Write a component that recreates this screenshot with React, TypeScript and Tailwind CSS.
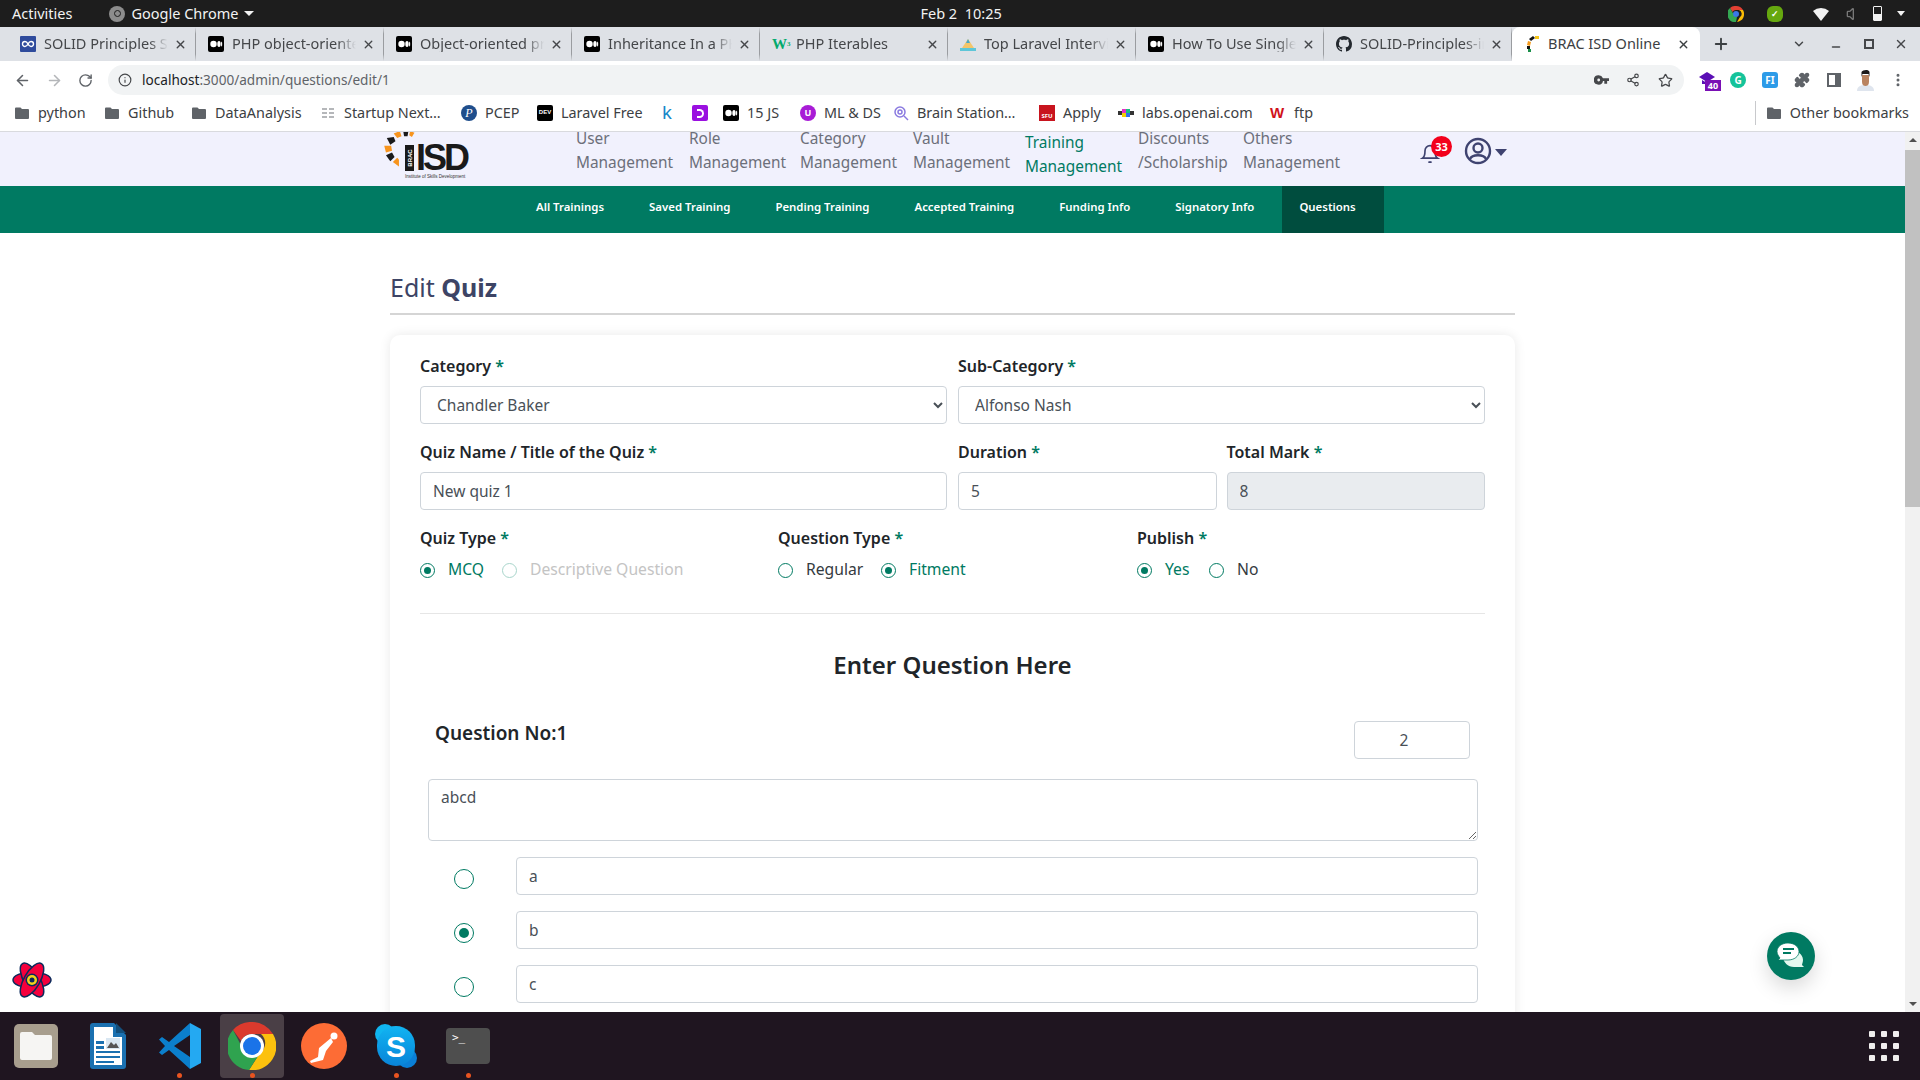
import { useState, type ReactNode } from "react";
import {
  ArrowLeft,
  ArrowRight,
  ChevronDown,
  EllipsisVertical,
  Info,
  Minus,
  Plus,
  Puzzle,
  RotateCw,
  Share2,
  Star,
  Volume,
  X,
} from "lucide-react";

const PAGE_FONT = "font-['Noto_Sans',sans-serif]";

function Medium() {
  return (
    <svg viewBox="0 0 16 16" className="h-4 w-4 shrink-0">
      <rect width="16" height="16" rx="2" fill="#000" />
      <circle cx="5.500" cy="8" r="3.200" fill="#fff" />
      <ellipse cx="11" cy="8" rx="1.700" ry="3" fill="#fff" />
      <ellipse cx="13.600" cy="8" rx="0.600" ry="2.600" fill="#fff" />
    </svg>
  );
}

function Folder() {
  return (
    <svg viewBox="0 0 16 16" className="h-4 w-4 shrink-0" fill="#5f6368">
      <path d="M2 2.500h4.500L8 4h6a1 1 0 0 1 1 1v8a1 1 0 0 1-1 1H2a1 1 0 0 1-1-1V3.500a1 1 0 0 1 1-1z" />
    </svg>
  );
}

const tabIcons: Record<string, ReactNode> = {
  solid: (
    <svg viewBox="0 0 16 16" className="h-4 w-4 shrink-0">
      <rect width="16" height="16" rx="1" fill="#2f4b9c" />
      <path d="M8 8c-1-2-2-2.500-3-2.500a2.500 2.500 0 0 0 0 5C6 10.500 7 10 8 8s2-2.500 3-2.500a2.500 2.500 0 0 1 0 5c-1 0-2-.5-3-2.500z" fill="none" stroke="#fff" strokeWidth="1.400" />
    </svg>
  ),
  medium: <Medium />,
  w3: (
    <span className="w-4 shrink-0 font-['Liberation_Serif',serif] text-[15px] font-bold leading-4 text-[#04aa6d]">
      W<sup className="text-[7px]">3</sup>
    </span>
  ),
  mountain: (
    <svg viewBox="0 0 16 16" className="h-4 w-4 shrink-0">
      <path d="M8 3l6 9H2z" fill="#f4c56a" />
      <path d="M0 12h16v3H0z" fill="#5ec6d8" />
      <path d="M6 7l2-4 2 4z" fill="#4aa8c8" />
    </svg>
  ),
  github: (
    <svg viewBox="0 0 16 16" className="h-4 w-4 shrink-0" fill="#24292f">
      <path d="M8 0C3.580 0 0 3.580 0 8c0 3.540 2.290 6.530 5.470 7.590.4.070.55-.17.55-.38 0-.19-.01-.82-.01-1.490-2.010.37-2.530-.49-2.690-.94-.09-.23-.48-.94-.82-1.130-.28-.15-.68-.52-.01-.53.63-.01 1.080.58 1.230.82.72 1.210 1.870.87 2.330.66.07-.52.28-.87.51-1.070-1.780-.2-3.640-.89-3.640-3.950 0-.87.31-1.590.82-2.150-.08-.2-.36-1.020.08-2.120 0 0 .67-.21 2.200.82.64-.18 1.320-.27 2-.27s1.360.09 2 .27c1.530-1.040 2.200-.82 2.200-.82.44 1.100.16 1.920.08 2.120.51.56.82 1.270.82 2.150 0 3.070-1.870 3.750-3.650 3.950.29.250.54.730.54 1.480 0 1.070-.01 1.930-.01 2.200 0 .21.150.460.550.380A8.010 8.010 0 0 0 16 8c0-4.420-3.580-8-8-8z" />
    </svg>
  ),
  isd: (
    <svg viewBox="0 0 16 16" className="h-4 w-4 shrink-0">
      <path d="M5 3l4-3 2 2-4 3z" fill="#111" />
      <path d="M11 0h4v3h-4z" fill="#f5c518" />
      <path d="M4 5l3 1-1 4-3-1z" fill="#f59a1b" />
      <path d="M3 10l3 0v3H3z" fill="#111" />
      <path d="M4 13l3 0v3H4z" fill="#1a8f4a" />
    </svg>
  ),
};

const tabs = [
  { icon: "solid", title: "SOLID Principles Simplified" },
  { icon: "medium", title: "PHP object-oriented programming" },
  { icon: "medium", title: "Object-oriented programming in PHP" },
  { icon: "medium", title: "Inheritance In a PHP Class" },
  { icon: "w3", title: "PHP Iterables" },
  { icon: "mountain", title: "Top Laravel Interview Questions" },
  { icon: "medium", title: "How To Use Single Responsibility" },
  { icon: "github", title: "SOLID-Principles-in-PHP" },
];

type Mark = { w: string; label: string; icon: ReactNode };

const bookmarks: Mark[] = [
  { w: "w-[90px]", label: "python", icon: <Folder /> },
  { w: "w-[87px]", label: "Github", icon: <Folder /> },
  { w: "w-[129px]", label: "DataAnalysis", icon: <Folder /> },
  {
    w: "w-[141px]",
    label: "Startup Next…",
    icon: (
      <svg viewBox="0 0 16 16" className="h-4 w-4 shrink-0" fill="#b5b7ba">
        <path d="M2 3h5v2H2zM9 3h5v2H9zM2 7h5v2H2zM9 7h5v2H9zM2 11h5v2H2zM9 11h5v2H9z" />
      </svg>
    ),
  },
  {
    w: "w-[76px]",
    label: "PCEP",
    icon: (
      <span className="flex h-4 w-4 shrink-0 items-center justify-center rounded-full bg-[#1f4e8c] font-['Liberation_Serif',serif] text-[12px] italic leading-none text-white">
        P
      </span>
    ),
  },
  {
    w: "w-[122px]",
    label: "Laravel Free",
    icon: (
      <span className="flex h-4 w-4 shrink-0 items-center justify-center rounded-[2px] bg-black font-['Liberation_Sans',sans-serif] text-[6px] font-bold text-white">
        DEV
      </span>
    ),
  },
  {
    w: "w-[33px]",
    label: "",
    icon: <span className="w-4 shrink-0 text-center font-['Liberation_Sans',sans-serif] text-[19px] leading-4 text-[#1a87c9]">k</span>,
  },
  {
    w: "w-[31px]",
    label: "",
    icon: (
      <span className="flex h-4 w-4 shrink-0 items-center justify-center rounded-[2px] bg-[#9a10e0]">
        <span className="h-[9px] w-[7px] rounded-r-full border-[2px] border-l-0 border-white" />
      </span>
    ),
  },
  { w: "w-[77px]", label: "15 JS", icon: <Medium /> },
  {
    w: "w-[93px]",
    label: "ML & DS",
    icon: (
      <span className="flex h-4 w-4 shrink-0 items-center justify-center rounded-full bg-[#a81cd6] text-[9px] font-bold text-white">
        U
      </span>
    ),
  },
  {
    w: "w-[146px]",
    label: "Brain Station…",
    icon: (
      <svg viewBox="0 0 16 16" className="h-4 w-4 shrink-0" fill="none" stroke="#8a7ae0" strokeWidth="1.500">
        <circle cx="7" cy="7" r="5" />
        <circle cx="7" cy="7" r="2" />
        <path d="M11 11l4 4" />
      </svg>
    ),
  },
  {
    w: "w-[79px]",
    label: "Apply",
    icon: (
      <span className="flex h-4 w-4 shrink-0 items-end justify-center bg-[#c8141e] text-[6px] font-bold leading-[9px] text-white">
        SFU
      </span>
    ),
  },
  {
    w: "w-[152px]",
    label: "labs.openai.com",
    icon: (
      <svg viewBox="0 0 16 8" className="h-2 w-4 shrink-0">
        <path d="M0 2h4v4H0z" fill="#333" />
        <path d="M4 0h4v4H4z" fill="#e62fc8" />
        <path d="M4 4h4v4H4z" fill="#f0d000" />
        <path d="M8 0h4v4H8z" fill="#19c37d" />
        <path d="M8 4h4v4H8z" fill="#2f6fed" />
        <path d="M12 2h4v4h-4z" fill="#333" />
      </svg>
    ),
  },
  {
    w: "w-[60px]",
    label: "ftp",
    icon: <span className="w-4 shrink-0 font-['Liberation_Sans',sans-serif] text-[15px] font-bold leading-4 text-[#d0121b]">W</span>,
  },
];

function ChromeTop() {
  return (
    <div className={`${PAGE_FONT} shrink-0`}>
      {/* gnome top bar */}
      <div className="relative flex h-[27px] items-center bg-[#1d1d1d] text-[14.500px] text-[#f2f2f2]">
        <span className="ml-[12px]">Activities</span>
        <span className="ml-[37px] flex h-4 w-4 items-center justify-center rounded-full bg-[#8d8d8d]">
          <span className="h-[7px] w-[7px] rounded-full border border-[#1d1d1d]" />
        </span>
        <span className="ml-[6px]">Google Chrome</span>
        <span className="ml-[6px] h-0 w-0 border-x-[5px] border-t-[5px] border-x-transparent border-t-[#f2f2f2]" />
        <span className="ml-[666px]">Feb 2&nbsp;&nbsp;10:25</span>
        <div className="ml-auto mr-[15px] flex items-center">
          <svg viewBox="0 0 16 16" className="mr-[23px] h-4 w-4">
            <path d="M8 0a8 8 0 0 1 7 4H8a4 4 0 0 0-3.500 2L2 2a8 8 0 0 1 6-2z" fill="#e34133" />
            <path d="M15 4a8 8 0 0 1-6 12l3-5a4 4 0 0 0-1-7z" fill="#fbbc05" />
            <path d="M2 2l4 7a4 4 0 0 0 3 2l-1 5A8 8 0 0 1 2 2z" fill="#34a853" />
            <circle cx="8" cy="8" r="3" fill="#3b78e7" />
          </svg>
          <span className="mr-[30px] flex h-4 w-4 items-center justify-center rounded-[6px] bg-[#66a80f] text-[9px] font-bold text-white">✓</span>
          <svg viewBox="0 0 16 14" className="mr-[17px] h-[14px] w-4" fill="#f2f2f2">
            <path d="M0 4a12 12 0 0 1 16 0L8 14z" />
          </svg>
          <Volume className="mr-[11px] h-4 w-4 text-[#777]" />
          <span className="mr-[15px] h-[15px] w-[9px] rounded-[1px] border border-[#f2f2f2] bg-gradient-to-t from-[#f2f2f2] from-50% to-transparent to-50%" />
          <span className="h-0 w-0 border-x-[4px] border-t-[5px] border-x-transparent border-t-[#f2f2f2]" />
        </div>
      </div>

      {/* tab strip */}
      <div className="flex h-[34px] items-stretch bg-[#dee1e6] pl-[8px] text-[14.500px] leading-[18px] text-[#45474a]">
        {tabs.map((t) => (
          <div key={t.title} className="flex w-[188px] items-center border-r border-[#9a9ca0] border-y-[7px] border-y-[#dee1e6] pl-[12px] pr-[8px]">
            {tabIcons[t.icon]}
            <span className="ml-[8px] min-w-0 flex-1 -translate-y-[1px] overflow-hidden whitespace-nowrap [mask-image:linear-gradient(to_right,black_85%,transparent)]">{t.title}</span>
            <X className="ml-[6px] h-[13px] w-[13px] shrink-0 text-[#45474a]" strokeWidth={2.500} />
          </div>
        ))}
        <div className="flex w-[188px] items-center rounded-t-[8px] bg-white pl-[12px] pr-[10px] text-[#3c4043]">
          {tabIcons.isd}
          <span className="ml-[8px] flex-1 -translate-y-[1px] whitespace-nowrap">BRAC ISD Online</span>
          <X className="h-[13px] w-[13px] shrink-0" strokeWidth={2.500} />
        </div>
        <Plus className="ml-[12px] h-[18px] w-[18px] self-center text-[#3c4043]" strokeWidth={2.500} />
        <ChevronDown className="ml-[62px] h-[14px] w-[14px] self-center text-[#45474a]" strokeWidth={2.500} />
        <Minus className="ml-[24px] h-3 w-3 translate-y-[3px] self-center text-[#45474a]" strokeWidth={3} />
        <span className="ml-[22px] h-[10px] w-[10px] self-center border-[2px] border-[#45474a]" />
        <X className="ml-[20px] h-[14px] w-[14px] self-center text-[#45474a]" strokeWidth={2.500} />
      </div>

      {/* toolbar */}
      <div className="flex h-[37px] items-center bg-white pt-[1px] text-[#5f6368]">
        <ArrowLeft className="ml-[14px] h-[17px] w-[17px]" strokeWidth={2.200} />
        <ArrowRight className="ml-[15px] h-[17px] w-[17px] text-[#b4b6b9]" strokeWidth={2.200} />
        <RotateCw className="ml-[15px] h-[15px] w-[15px]" strokeWidth={2.200} />
        <div className="ml-[15px] flex h-[30px] w-[1576px] items-center rounded-full bg-[#f1f3f4] pl-[10px] pr-[11px] text-[13.600px]">
          <Info className="h-[14px] w-[14px] text-[#45474a]" />
          <span className="ml-[10px] text-[#202124]">localhost</span>
          <span className="text-[#5f6368]">:3000/admin/questions/edit/1</span>
          <svg viewBox="0 0 16 10" className="ml-auto h-[10px] w-[15px]" fill="#45474a">
            <path d="M5 0a5 5 0 0 1 4.600 3H16v3h-2v3h-3V6H9.600A5 5 0 1 1 5 0zm0 3.500a1.500 1.500 0 1 0 0 3 1.500 1.500 0 0 0 0-3z" />
          </svg>
          <Share2 className="ml-[17px] h-[14px] w-[14px] text-[#45474a]" />
          <Star className="ml-[18px] h-[15px] w-[15px] text-[#45474a]" />
        </div>
        <div className="relative ml-[15px] h-4 w-4">
          <svg viewBox="0 0 16 14" className="h-[14px] w-4" fill="#5a0fb5">
            <path d="M8 0l8 5-8 5-8-5z" />
            <path d="M3 8l5 3 5-3v4H3z" />
          </svg>
          <span className="absolute left-[6px] top-[8px] flex h-[11px] w-[16px] items-center justify-center bg-[#7a0fb5] text-[9px] font-bold leading-none text-white">40</span>
        </div>
        <span className="ml-[15px] flex h-4 w-4 items-center justify-center rounded-full bg-[#15c39a] text-[10px] font-bold text-white">G</span>
        <span className="ml-[16px] flex h-4 w-4 items-center justify-center rounded-[3px] bg-[#2d9be8] text-[10px] font-bold text-white">FI</span>
        <Puzzle className="ml-[16px] h-4 w-4 fill-[#5f6368]" />
        <span className="ml-[17px] h-[14px] w-[14px] border-[2px] border-r-[6px] border-[#5f6368]" />
        <svg viewBox="0 0 17 22" className="ml-[16px] h-[22px] w-[17px]">
          <path d="M0 22c0-5 4-6 8.500-6s8.500 1 8.500 6z" fill="#dfe5ee" />
          <path d="M5 6h7v7c0 3-2 4-3.500 4S5 16 5 13z" fill="#b9835f" />
          <path d="M4.500 8V3c1-2 7-3 8 0v5l-1-3h-6z" fill="#1c1a1a" />
        </svg>
        <EllipsisVertical className="ml-[16px] h-4 w-4" strokeWidth={2.500} />
      </div>

      {/* bookmarks */}
      <div className="flex h-[34px] items-center border-b border-[#d9dade] bg-white pb-[3px] pl-[14px] text-[14.400px] text-[#3c4043]">
        {bookmarks.map((b, i) => (
          <div key={i} className={`flex shrink-0 items-center gap-[8px] ${b.w}`}>
            {b.icon}
            <span className="whitespace-nowrap">{b.label}</span>
          </div>
        ))}
        <div className="ml-auto mr-[11px] flex h-[24px] items-center gap-[8px] border-l border-[#c8c9cc] pl-[10px]">
          <Folder />
          <span className="whitespace-nowrap">Other bookmarks</span>
        </div>
      </div>
    </div>
  );
}

const mainNav = [
  { w: "w-[113px]", a: "User", b: "Management" },
  { w: "w-[111px]", a: "Role", b: "Management" },
  { w: "w-[113px]", a: "Category", b: "Management" },
  { w: "w-[112px]", a: "Vault", b: "Management" },
  { w: "w-[113px]", a: "Training", b: "Management", active: true },
  { w: "w-[105px]", a: "Discounts", b: "/Scholarship" },
  { w: "w-[150px]", a: "Others", b: "Management" },
];

const subNav = ["All Trainings", "Saved Training", "Pending Training", "Accepted Training", "Funding Info", "Signatory Info", "Questions"];

function Logo() {
  return (
    <div className="relative h-[54px] w-[192px] shrink-0">
      <svg viewBox="0 0 40 44" className="absolute left-0 top-[-1px] h-[38px] w-[35px]">
        <path d="M11 3l7-3 2 6-5 2z" fill="#f7941d" />
        <path d="M22 0h6l-1 6h-4z" fill="#1a1a1a" />
        <path d="M30 0l5 2-3 5-3-2z" fill="#f7941d" />
        <path d="M3 8l8-1 2 5-6 4z" fill="#1a1a1a" />
        <path d="M0 17l8 0 1 6-7 2z" fill="#f7941d" />
        <path d="M2 28l7-3 3 5-5 5z" fill="#1a1a1a" />
        <path d="M10 36l5-5 2 2v8z" fill="#f7941d" />
      </svg>
      <div className="absolute left-[21px] top-[13px] flex h-[26px] w-[9px] items-center justify-center bg-[#1a1a1a]">
        <span className="-rotate-90 whitespace-nowrap font-['Liberation_Sans',sans-serif] text-[6px] font-bold leading-none text-white">BRAC</span>
      </div>
      <span className="absolute left-[32px] top-[8px] font-['Liberation_Sans',sans-serif] text-[36px] font-bold leading-[36px] tracking-[-3px] text-[#1a1a1a]">ISD</span>
      <span className="absolute left-[21px] top-[41px] whitespace-nowrap font-['Liberation_Sans',sans-serif] text-[4.500px] leading-[8px] text-[#333]">Institute of Skills Development</span>
    </div>
  );
}

function SiteHeader() {
  return (
    <>
      <div className="flex h-[54px] items-start overflow-hidden bg-[#f1f1fd] pl-[384px] text-[15.400px] leading-[24px] text-[#6c6f7a]">
        <Logo />
        {mainNav.map((n) => (
          <div key={n.a} className={`${n.w} shrink-0 whitespace-nowrap ${n.active ? "mt-[-1px] text-[#007a62]" : "mt-[-5px]"}`}>
            <div>{n.a}</div>
            <div>{n.b}</div>
          </div>
        ))}
        <div className="relative ml-[27px] mt-[10px] h-[22px] w-[20px]">
          <svg viewBox="0 0 24 24" className="mt-[2px] h-[20px] w-[20px]" fill="none" stroke="#3f4370" strokeWidth="2">
            <path d="M6 8a6 6 0 0 1 12 0c0 7 3 9 3 9H3s3-2 3-9" />
            <path d="M10.300 21a2 2 0 0 0 3.400 0" />
          </svg>
          <span className="absolute left-[11px] top-[-6px] flex h-[21px] w-[21px] items-center justify-center rounded-full bg-[#f3001b] text-[11px] font-bold leading-none text-white">33</span>
        </div>
        <svg viewBox="0 0 28 28" className="ml-[24px] mt-[5px] h-[28px] w-[28px]" fill="none" stroke="#3f4370" strokeWidth="2.400">
          <circle cx="14" cy="14" r="12" />
          <circle cx="14" cy="11" r="4.500" />
          <path d="M6 22c2-5 14-5 16 0" />
        </svg>
        <span className="ml-[3px] mt-[17px] h-0 w-0 border-x-[6px] border-t-[7px] border-x-transparent border-t-[#3f4370]" />
      </div>
      <div className="flex h-[47px] items-stretch bg-[#007a62] pl-[519px] text-[11.400px] font-semibold text-white">
        {subNav.map((s) => (
          <div key={s} className={`flex items-center whitespace-nowrap pb-[5px] pl-[17px] pr-[28px] ${s === "Questions" ? "bg-[#004d3e]" : ""}`}>
            {s}
          </div>
        ))}
      </div>
    </>
  );
}

function Radio({ on, big, faded }: { on?: boolean; big?: boolean; faded?: boolean }) {
  return (
    <span
      className={`flex shrink-0 items-center justify-center rounded-full border bg-white ${big ? "h-[20px] w-[20px]" : "h-[15px] w-[15px]"} ${faded ? "border-[#a8d5cb]" : "border-[#007a62]"}`}
    >
      {on && <span className={`rounded-full bg-[#007a62] ${big ? "h-[10px] w-[10px]" : "h-[7px] w-[7px]"}`} />}
    </span>
  );
}

function Label({ children, gap = "mb-[8px]" }: { children: ReactNode; gap?: string }) {
  return (
    <label className={`${gap} block h-[24px] text-[16px] font-semibold leading-[24px] text-[#212529]`}>
      {children} <span className="text-[#007a62]">*</span>
    </label>
  );
}

const fieldCls = "h-[38px] w-full rounded-[4px] border border-[#ced4da] text-[15.500px] text-[#495057] outline-none";

function Field({ value, grey }: { value: string; grey?: boolean }) {
  return <input readOnly value={value} className={`${fieldCls} px-[12px] ${grey ? "bg-[#e9ecef]" : "bg-white"}`} />;
}

function Choice({ on, text, w, faded }: { on?: boolean; text: string; w: string; faded?: boolean }) {
  return (
    <div className={`flex items-center ${w}`}>
      <Radio on={on} faded={faded} />
      <span className={`ml-[13px] whitespace-nowrap text-[15.700px] ${faded ? "text-[#c4c4c4]" : on ? "text-[#007a62]" : "text-[#343a40]"}`}>{text}</span>
    </div>
  );
}

function QuizForm() {
  const [options] = useState([
    { text: "a", on: false },
    { text: "b", on: true },
    { text: "c", on: false },
  ]);
  return (
    <div className="mx-auto w-[1125px]">
      <h1 className="mt-[36px] h-[36px] text-[25px] font-normal leading-[36px] text-[#3d4465]">
        Edit <span className="font-bold">Quiz</span>
      </h1>
      <div className="mt-[8px] h-[2px] bg-[#d5d5d5]" />
      <div className="mt-[20px] rounded-[10px] bg-white px-[30px] pb-[40px] pt-[19px] shadow-[0_0_12px_rgba(0,0,0,0.09)]">
        <div className="grid grid-cols-2 gap-x-[11px]">
          <div>
            <Label>Category</Label>
            <select className={`${fieldCls} bg-white pl-[12px]`} defaultValue="Chandler Baker">
              <option>Chandler Baker</option>
            </select>
          </div>
          <div>
            <Label>Sub-Category</Label>
            <select className={`${fieldCls} bg-white pl-[12px]`} defaultValue="Alfonso Nash">
              <option>Alfonso Nash</option>
            </select>
          </div>
        </div>
        <div className="mt-[16px] grid grid-cols-2 gap-x-[11px]">
          <div>
            <Label>Quiz Name / Title of the Quiz</Label>
            <Field value="New quiz 1" />
          </div>
          <div className="grid grid-cols-2 gap-x-[10px]">
            <div>
              <Label>Duration</Label>
              <Field value="5" />
            </div>
            <div>
              <Label>Total Mark</Label>
              <Field value="8" grey />
            </div>
          </div>
        </div>
        <div className="mt-[16px] flex">
          <div className="w-[358px]">
            <Label gap="mb-[10px]">Quiz Type</Label>
            <div className="flex h-[20px]">
              <Choice on text="MCQ" w="w-[82px]" />
              <Choice faded text="Descriptive Question" w="w-[200px]" />
            </div>
          </div>
          <div className="w-[359px]">
            <Label gap="mb-[10px]">Question Type</Label>
            <div className="flex h-[20px]">
              <Choice text="Regular" w="w-[103px]" />
              <Choice on text="Fitment" w="w-[120px]" />
            </div>
          </div>
          <div>
            <Label gap="mb-[10px]">Publish</Label>
            <div className="flex h-[20px]">
              <Choice on text="Yes" w="w-[72px]" />
              <Choice text="No" w="w-[60px]" />
            </div>
          </div>
        </div>
        <div className="mt-[33px] h-[1px] bg-[#e6e6e6]" />
        <h2 className="mt-[31px] h-[40px] text-center text-[24px] font-semibold leading-[40px] text-[#212529]">Enter Question Here</h2>
        <div className="mt-[36px] flex items-start justify-between pl-[15px] pr-[15px]">
          <div className="h-[24px] text-[19px] font-semibold leading-[24px] text-[#212529]">Question No:1</div>
          <input readOnly value="2" className={`${fieldCls} !w-[116px] bg-white pr-[16px] text-center`} />
        </div>
        <textarea readOnly value="abcd" className="mt-[20px] ml-[8px] block h-[62px] w-[1050px] rounded-[4px] border border-[#ced4da] px-[12px] py-[6px] text-[15.500px] text-[#495057] outline-none" />
        <div className="mt-[16px] flex flex-col gap-[16px] pl-[8px]">
          {options.map((o) => (
            <div key={o.text} className="flex items-center">
              <span className="ml-[26px] mt-[6px]">
                <Radio on={o.on} big />
              </span>
              <div className="ml-[42px] w-[962px]">
                <Field value={o.text} />
              </div>
            </div>
          ))}
        </div>
      </div>
    </div>
  );
}

function Dock() {
  return (
    <div className="flex h-[68px] shrink-0 items-center bg-[#1f1520] pl-[14px]">
      {/* files */}
      <div className="relative h-[44px] w-[44px] rounded-[5px] bg-[#a89e8e]">
        <svg viewBox="0 0 32 28" className="absolute left-[6px] top-[8px] h-[28px] w-[32px]" fill="#f6f5f3">
          <path d="M2 0h10l3 3h15a2 2 0 0 1 2 2v21a2 2 0 0 1-2 2H2a2 2 0 0 1-2-2V2a2 2 0 0 1 2-2z" />
        </svg>
      </div>
      {/* libreoffice writer */}
      <svg viewBox="0 0 36 46" className="ml-[32px] h-[46px] w-[36px]">
        <path d="M3 0h21l12 12v31a3 3 0 0 1-3 3H3a3 3 0 0 1-3-3V3a3 3 0 0 1 3-3z" fill="#1a70b0" />
        <path d="M4 4h19v10h9v28H4z" fill="#fff" />
        <path d="M26 0l10 10h-10z" fill="#134f7c" />
        <path d="M6 18h8v3H6zM6 23h8v3H6zM6 28h24v2H6zM6 33h24v2H6zM6 38h18v2H6z" fill="#1a70b0" />
        <path d="M16 15h14v11H16z" fill="#d9e7f2" />
        <path d="M17 25l4-6 3 3 2-2 3 5z" fill="#555" />
      </svg>
      {/* vs code */}
      <div className="relative ml-[33px] h-[46px] w-[42px]">
        <svg viewBox="0 0 42 46" className="h-[46px] w-[42px]">
          <path d="M31 0L10 19 3 14 0 16.500 6 23 0 29.500 3 32l7-5 21 19V34L15 23 31 12z" fill="#0b7fcc" />
          <path d="M31 0l11 6v34l-11 6z" fill="#24a9f2" />
        </svg>
        <span className="absolute bottom-[-9px] left-[18px] h-[5px] w-[5px] rounded-full bg-[#e95420]" />
      </div>
      {/* chrome */}
      <div className="relative ml-[19px] flex h-[64px] w-[64px] items-center justify-center rounded-[4px] bg-[#4a3f46]">
        <svg viewBox="0 0 48 48" className="h-[48px] w-[48px]">
          <path d="M24 0a24 24 0 0 1 21 12H24a12 12 0 0 0-11 7L5 8A24 24 0 0 1 24 0z" fill="#db3a2d" />
          <path d="M45 12a24 24 0 0 1-24 36l11-17a12 12 0 0 0 1-19z" fill="#fcc10e" />
          <path d="M5 8l11 21a12 12 0 0 0 14 5L21 48A24 24 0 0 1 5 8z" fill="#2fa34f" />
          <circle cx="24" cy="24" r="12" fill="#fff" />
          <circle cx="24" cy="24" r="9" fill="#1a73e8" />
        </svg>
        <span className="absolute bottom-[0px] left-[30px] h-[5px] w-[5px] rounded-full bg-[#e95420]" />
      </div>
      {/* postman */}
      <div className="ml-[17px] flex h-[46px] w-[46px] items-center justify-center rounded-full bg-[#fd6c35]">
        <svg viewBox="0 0 46 46" className="h-[46px] w-[46px]" fill="#fff">
          <circle cx="33" cy="13" r="3.500" />
          <path d="M30 15l2 4-7 9-3 9-12 3-1-2 8-4 1-9z" />
        </svg>
      </div>
      {/* skype */}
      <div className="relative ml-[28px] h-[44px] w-[42px]">
        <span className="absolute left-0 top-0 h-[20px] w-[20px] rounded-full bg-[#10b5f0]" />
        <span className="absolute bottom-0 right-0 h-[20px] w-[20px] rounded-full bg-[#0a7fd6]" />
        <div className="absolute inset-[2px] flex items-center justify-center rounded-full bg-gradient-to-b from-[#12b4f2] to-[#0a84d8] font-['Liberation_Sans',sans-serif] text-[30px] font-bold text-white">S</div>
        <span className="absolute bottom-[-10px] left-[19px] h-[5px] w-[5px] rounded-full bg-[#e95420]" />
      </div>
      {/* terminal */}
      <div className="relative ml-[29px] h-[36px] w-[44px] rounded-[4px] bg-[#4e4e4e] pl-[6px] pt-[3px] font-['DejaVu_Sans_Mono',monospace] text-[11px] leading-[14px] text-white">
        &gt;_
        <span className="absolute bottom-[-14px] left-[20px] h-[5px] w-[5px] rounded-full bg-[#e95420]" />
      </div>
      <div className="ml-auto mr-[21px] grid grid-cols-3 gap-[6px]">
        {Array.from({ length: 9 }).map((_, i) => (
          <span key={i} className="h-[6px] w-[6px] rounded-[1px] bg-[#f0eeee]" />
        ))}
      </div>
    </div>
  );
}

export default function App() {
  return (
    <div className={`relative flex h-screen w-screen flex-col overflow-hidden bg-white ${PAGE_FONT}`}>
      <ChromeTop />
      <div className="flex min-h-0 flex-1">
        <div className="min-w-0 flex-1 overflow-hidden">
          <SiteHeader />
          <QuizForm />
        </div>
        {/* page scrollbar */}
        <div className="flex w-[15px] shrink-0 flex-col items-center bg-[#f1f1f1]">
          <span className="mt-[6px] h-0 w-0 border-x-[4px] border-b-[4px] border-x-transparent border-b-[#505050]" />
          <span className="mt-[8px] h-[357px] w-full bg-[#c1c1c1]" />
          <span className="mb-[6px] mt-auto h-0 w-0 border-x-[4px] border-t-[4px] border-x-transparent border-t-[#505050]" />
        </div>
      </div>
      <Dock />

      {/* floating over the page */}
      <svg viewBox="0 0 40 40" className="absolute left-[12px] top-[960px] h-[40px] w-[40px]">
        <g fill="#f5003d" stroke="#0b2a5b" strokeWidth="1.500">
          <ellipse cx="20" cy="20" rx="19" ry="8" />
          <ellipse cx="20" cy="20" rx="19" ry="8" transform="rotate(60 20 20)" />
          <ellipse cx="20" cy="20" rx="19" ry="8" transform="rotate(120 20 20)" />
        </g>
        <circle cx="20" cy="20" r="6.500" fill="#0b2a5b" />
        <circle cx="20" cy="20" r="5" fill="#f2d21b" />
        <circle cx="20" cy="20" r="2.500" fill="#0b2a5b" />
      </svg>
      <div className="absolute left-[1767px] top-[932px] flex h-[48px] w-[48px] items-center justify-center rounded-full bg-[#007a62] shadow-[0_8px_20px_rgba(0,0,0,0.15)]">
        <svg viewBox="0 0 30 28" className="h-[28px] w-[30px]">
          <path d="M14 8c7 0 13 4 13 10 0 2-1 4-1 5l2 2H18c-6 0-11-5-11-10z" fill="#e3f8ef" />
          <path d="M12 1c6 0 11 3.500 11 8.500S18 18 12 18H2l2-2C2.500 14 1 12 1 9.500 1 4.500 6 1 12 1z" fill="#fff" stroke="#007a62" strokeWidth="0.800" />
          <path d="M7 7h11M7 11h8" stroke="#007a62" strokeWidth="1.800" />
        </svg>
      </div>
    </div>
  );
}
